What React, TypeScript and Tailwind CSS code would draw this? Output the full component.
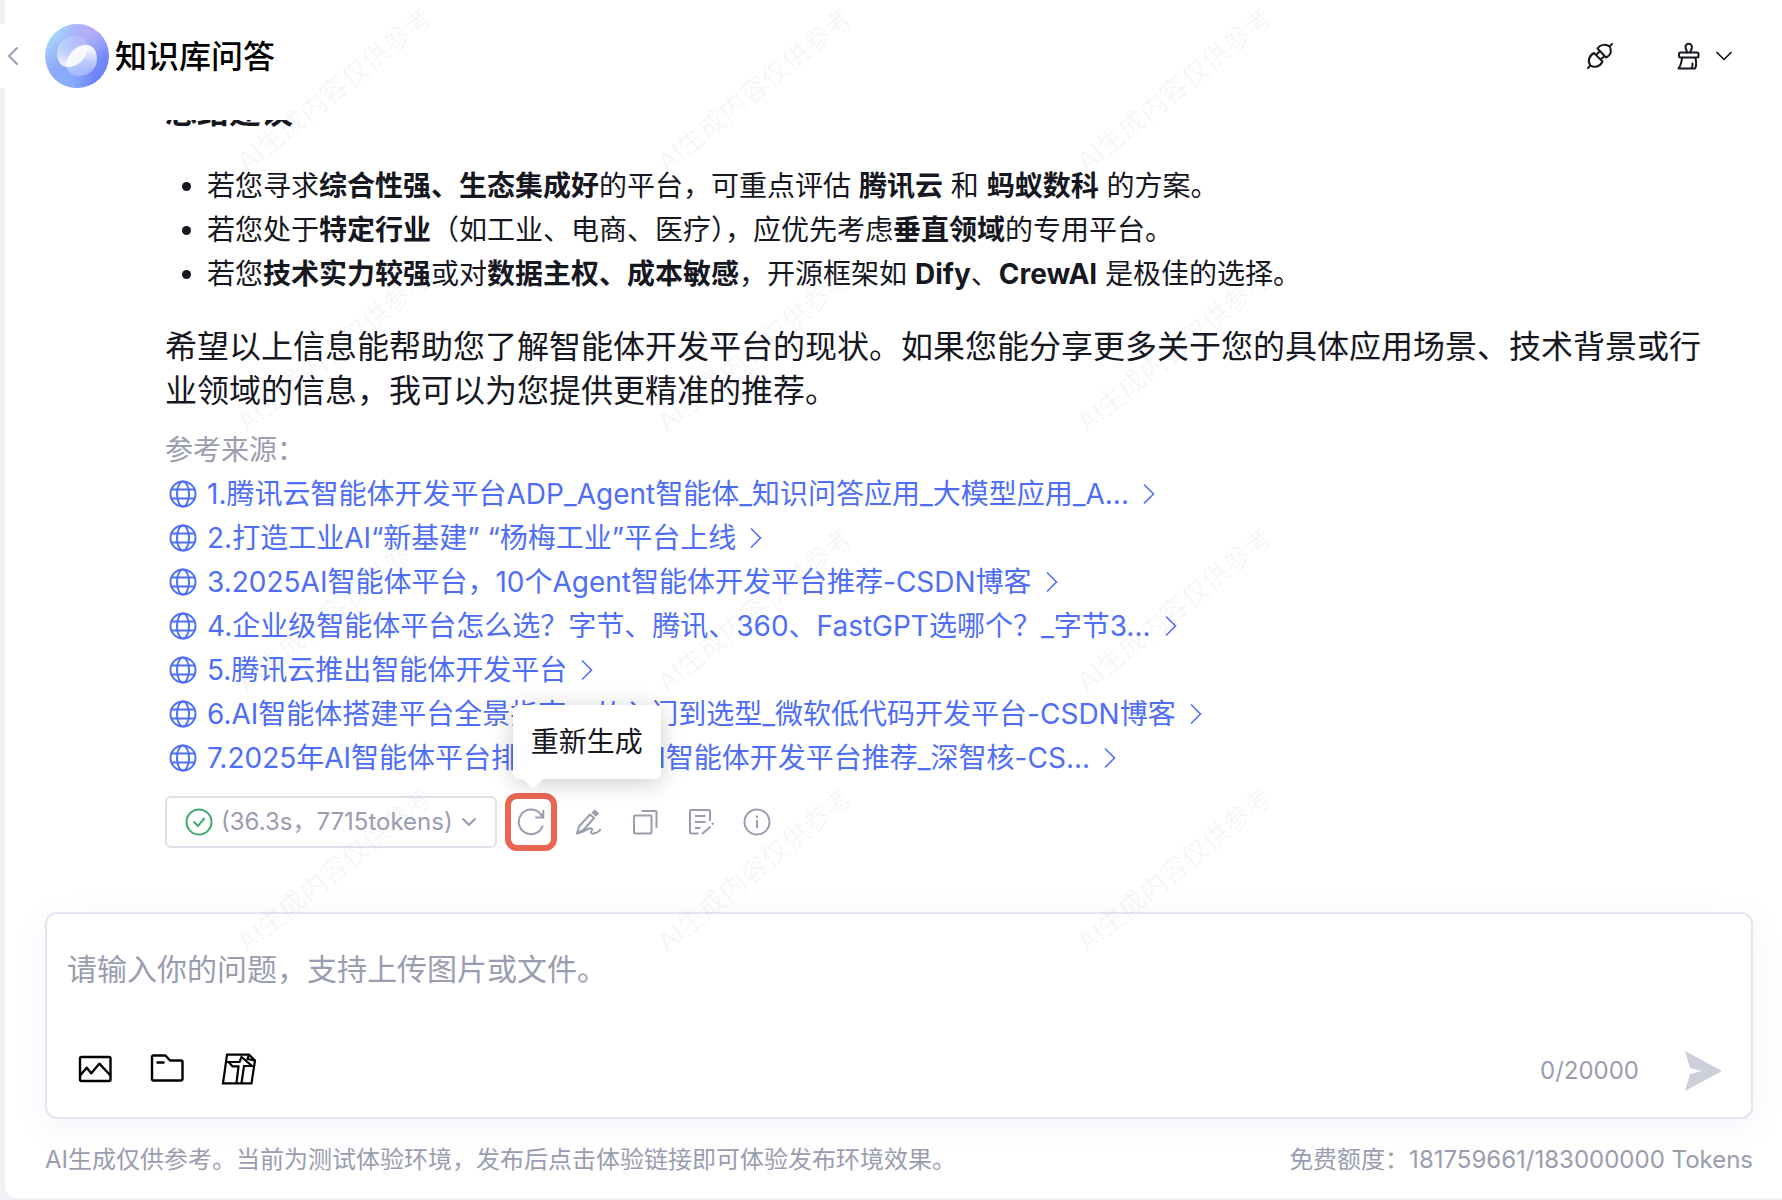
import React, { useState } from 'react';
import { ChevronDown, ChevronLeft } from 'lucide-react';

interface Source {
  id: number;
  title: string;
}

const SOURCES: Source[] = [
  { id: 1, title: '腾讯云智能体开发平台ADP_Agent智能体_知识问答应用_大模型应用_A...' },
  { id: 2, title: '打造工业AI“新基建” “杨梅工业”平台上线' },
  { id: 3, title: '2025AI智能体平台，10个Agent智能体开发平台推荐-CSDN博客' },
  { id: 4, title: '企业级智能体平台怎么选？字节、腾讯、360、FastGPT选哪个？_字节3...' },
  { id: 5, title: '腾讯云推出智能体开发平台' },
  { id: 6, title: 'AI智能体搭建平台全景指南：从入门到选型_微软低代码开发平台-CSDN博客' },
  { id: 7, title: '2025年AI智能体平台排行榜汇总 AI智能体开发平台推荐_深智核-CS...' },
];

const MAX_LENGTH = 20000;

const Logo = () => (
  <svg viewBox="0 0 64 64" className="h-16 w-16 shrink-0" aria-hidden="true">
    <defs>
      <linearGradient id="logo-bg" x1="0.1" y1="0.1" x2="0.85" y2="0.85">
        <stop offset="0" stopColor="#abdcfb" />
        <stop offset="0.45" stopColor="#8fa6fa" />
        <stop offset="1" stopColor="#6a80f8" />
      </linearGradient>
      <radialGradient id="logo-pink" cx="0.68" cy="0.08" r="0.45">
        <stop offset="0" stopColor="#b9aef8" />
        <stop offset="1" stopColor="#b9aef8" stopOpacity="0" />
      </radialGradient>
      <radialGradient id="logo-sky" cx="0.3" cy="1" r="0.5">
        <stop offset="0" stopColor="#8cb4fb" />
        <stop offset="1" stopColor="#8cb4fb" stopOpacity="0" />
      </radialGradient>
      <linearGradient id="logo-top" x1="0.3" y1="1" x2="0.6" y2="0">
        <stop offset="0" stopColor="#fff" stopOpacity="0.9" />
        <stop offset="0.4" stopColor="#fff" stopOpacity="0.4" />
        <stop offset="1" stopColor="#fff" stopOpacity="0.15" />
      </linearGradient>
      <linearGradient id="logo-bottom" x1="0.6" y1="0" x2="0.4" y2="1">
        <stop offset="0" stopColor="#fff" stopOpacity="0.95" />
        <stop offset="0.5" stopColor="#fff" stopOpacity="0.5" />
        <stop offset="1" stopColor="#fff" stopOpacity="0.25" />
      </linearGradient>
    </defs>
    <circle cx="32" cy="32" r="32" fill="url(#logo-bg)" />
    <circle cx="32" cy="32" r="32" fill="url(#logo-pink)" />
    <circle cx="32" cy="32" r="32" fill="url(#logo-sky)" />
    <path d="M12 29C12 19 20 12 30 12C38 12 43 16 43 23C43 33 34 43 23 43C16 43 12 37 12 29Z" fill="url(#logo-top)" />
    <path d="M52 35C52 45 44 52 34 52C26 52 21.500 48 21.500 41C21.500 31 30 21 41 21C48 21 52 27 52 35Z" fill="url(#logo-bottom)" />
    <path d="M21.500 42.800C21 33 29 21.500 43 21C43 33 34 43 21.500 42.800Z" fill="#fff" fillOpacity="0.7" />
  </svg>
);

const PlugIcon = () => (
  <svg viewBox="0 0 28 28" className="h-7 w-7" fill="none" stroke="currentColor" strokeWidth="2" strokeLinecap="round" strokeLinejoin="round" aria-hidden="true">
    <path d="M11.500 6.500L20 15.500C25.500 13 26 8 23.500 4.500C20 1.500 14 2.500 11.500 6.500ZM23.500 4.500L26 2" />
    <path d="M8 11L16.500 19.500C14 25 8 26 4.500 23.500C1.500 20 2.500 14 8 11ZM10 13l3-3M14.500 17.500l3-2.500M4.500 23.500L2 26" />
  </svg>
);

const BrushIcon = () => (
  <svg viewBox="0 0 28 28" className="h-7 w-7" fill="none" stroke="currentColor" strokeWidth="2" strokeLinecap="round" strokeLinejoin="round" aria-hidden="true">
    <path d="M13 10.500C13 8 11.500 7.500 11.500 5a3.200 3.200 0 0 1 6.400 0C17.900 7.500 16.500 8 16.500 10.500" />
    <rect x="5" y="10.500" width="19.500" height="5" rx="1.500" />
    <path d="M8 16C7.500 21 6.500 24 4.500 26.500H21C22 25 22.500 21 21.500 16M17.500 26C18.500 25 18.800 23.500 18.500 21.500" />
  </svg>
);

const GlobeIcon = () => (
  <svg viewBox="0 0 28 28" className="h-7 w-7 shrink-0" fill="none" stroke="currentColor" strokeWidth="2" aria-hidden="true">
    <circle cx="14" cy="14" r="12.500" />
    <ellipse cx="14" cy="14" rx="6" ry="12.500" />
    <path d="M2.500 9.500h23M2.500 18.500h23" />
  </svg>
);

const ArrowIcon = () => (
  <svg viewBox="0 0 12 22" className="h-[22px] w-3 shrink-0" fill="none" stroke="currentColor" strokeWidth="1.600" aria-hidden="true">
    <path d="M1 1.500L10.500 11L1 20.500" />
  </svg>
);

const CheckIcon = () => (
  <svg viewBox="0 0 28 28" className="h-7 w-7 text-[#3cab6b]" fill="none" stroke="currentColor" strokeWidth="2" aria-hidden="true">
    <circle cx="14" cy="14" r="12.500" />
    <path d="M8.500 13.500l4.500 4.500l6.500-8" />
  </svg>
);

const RefreshIcon = () => (
  <svg viewBox="0 0 28 28" className="h-7 w-7" fill="none" stroke="currentColor" strokeWidth="2" aria-hidden="true">
    <path d="M25.800 17.500A12.300 12.300 0 1 1 23.500 6L26 9M26.300 2v7.500h-8" />
  </svg>
);

const EditIcon = () => (
  <svg viewBox="0 0 28 28" className="h-7 w-7" fill="none" stroke="currentColor" strokeWidth="2" strokeLinejoin="round" aria-hidden="true">
    <path d="M2 25.500l2-7L15 6.500l4 3.500L8.500 22z" />
    <path d="M2 25.500c5-.5 8-3 11-4.500c3-1.500 5-.5 3.500 2c-1 2 0 3 2 2.500c3-.5 6-1.500 7-4.500" />
    <path d="M18 3l4.500 4" strokeWidth="4.500" />
  </svg>
);

const CopyIcon = () => (
  <svg viewBox="0 0 28 28" className="h-7 w-7" fill="none" stroke="currentColor" strokeWidth="2" strokeLinejoin="round" aria-hidden="true">
    <rect x="3" y="7.500" width="17.500" height="18" rx="1" />
    <path d="M10.500 3H24.500a1 1 0 0 1 1 1V20" />
  </svg>
);

const NoteIcon = () => (
  <svg viewBox="0 0 28 28" className="h-7 w-7" fill="none" stroke="currentColor" strokeWidth="2" strokeLinejoin="round" aria-hidden="true">
    <path d="M11.500 25.500H4a1 1 0 0 1-1-1V3a1 1 0 0 1 1-1H22a1 1 0 0 1 1 1V13M8 8h10.500M8 14h10.500M8 20h5.500M15 26l8.500-7.500M25 16.500l1.500-1.500" />
  </svg>
);

const InfoIcon = () => (
  <svg viewBox="0 0 28 28" className="h-7 w-7" fill="none" stroke="currentColor" strokeWidth="2" aria-hidden="true">
    <circle cx="14" cy="14" r="12.500" />
    <path d="M14 12v8M14 7.500v2.500" />
  </svg>
);

const ImageIcon = () => (
  <svg viewBox="0 0 36 36" className="h-9 w-9" fill="none" stroke="currentColor" strokeWidth="2.400" strokeLinejoin="round" aria-hidden="true">
    <rect x="3" y="6" width="30.500" height="24" rx="1.500" />
    <path d="M3 24.500L9.700 16.700L14.300 22.300L22.300 12.700L33.500 24.500" />
  </svg>
);

const FolderIcon = () => (
  <svg viewBox="0 0 36 36" className="h-9 w-9" fill="none" stroke="currentColor" strokeWidth="2.400" strokeLinejoin="round" aria-hidden="true">
    <path d="M3 6a1.500 1.500 0 0 1 1.500-1.500H16.500L21 9.500H32a1.500 1.500 0 0 1 1.500 1.500V28a1.500 1.500 0 0 1-1.500 1.500H4.500A1.500 1.500 0 0 1 3 28ZM7.500 11.500H15.500" />
  </svg>
);

const TextFileIcon = () => (
  <svg viewBox="0 0 36 36" className="h-9 w-9" fill="none" stroke="currentColor" strokeWidth="2.200" aria-hidden="true">
    <path d="M6 3.700H28L34 9.500L30.500 32.300H2ZM28 3.700L26.500 8L33.500 9.500" />
    <path d="M5.500 11H18.500L20.500 6L31 15H23L20.500 32M7.500 11L11.500 15.300H17.500L15.500 32" />
  </svg>
);

const SendIcon = () => (
  <svg viewBox="0 0 38 40" className="h-10 w-10" fill="currentColor" aria-hidden="true">
    <path d="M1 0L38 20L1 40L6 23L18 20L6 17Z" />
  </svg>
);

const Watermark = () => (
  <div className="pointer-events-none absolute inset-0 z-20 overflow-hidden pt-0.5 pl-[120px]" aria-hidden="true">
    <div className="grid auto-rows-[176px] grid-cols-[repeat(3,420px)] gap-y-[84px]">
      {[...Array(12)].map((_, i) => (
        <div key={i} className="flex items-center justify-center">
          <span className="-rotate-39 text-[27px] whitespace-nowrap text-[#5a5f8c]/6">AI生成内容仅供参考</span>
        </div>
      ))}
    </div>
  </div>
);

const SourceLink = ({ source }: { source: Source }) => (
  <li className="flex">
    <a href={`#source-${source.id}`} className="flex h-11 items-center pl-1 text-[#4f6ef7]">
      <GlobeIcon />
      <span className="ml-2.5 whitespace-nowrap">
        {source.id}.{source.title}
      </span>
      <span className="ml-3.5">
        <ArrowIcon />
      </span>
    </a>
  </li>
);

export default function App() {
  const [question, setQuestion] = useState('');

  return (
    <div className="h-screen bg-[#eff1f5] pb-0.5 pl-[5px] font-[Inter,'Noto_Sans_CJK_SC',sans-serif] text-[#16171f]">
      <div className="relative flex h-full flex-col rounded-bl-xl bg-white pr-[29px] pl-10">
        <Watermark />

        {/* Header */}
        <header className="flex h-[120px] shrink-0 items-start justify-between pt-6">
          <div className="flex h-16 items-center">
            <button type="button" aria-label="收起" className="absolute -left-[5px] flex h-16 w-[26px] items-center justify-center bg-white text-[#9a9cb0]">
              <ChevronLeft className="h-8 w-8 shrink-0" strokeWidth={1.5} />
            </button>
            <Logo />
            <h1 className="ml-1.5 pt-0.5 text-[32px] font-medium text-black">知识库问答</h1>
          </div>
          <div className="flex h-16 items-center pr-[15px]">
            <button type="button" aria-label="插件">
              <PlugIcon />
            </button>
            <button type="button" aria-label="清空对话" className="ml-15 flex items-center gap-2">
              <BrushIcon />
              <ChevronDown className="h-7 w-7" strokeWidth={1.5} />
            </button>
          </div>
        </header>

        {/* Conversation */}
        <main className="flex min-h-0 flex-1 flex-col justify-end overflow-hidden pr-10 pb-[61px] pl-[120px]">
          <h2 className="text-[32px] leading-11 font-bold">总结建议</h2>
          <ul className="mt-[30px] list-disc pl-[42px] text-[28px] leading-11">
            <li>
              若您寻求<strong>综合性强、生态集成好</strong>的平台，可重点评估 <strong>腾讯云</strong> 和 <strong>蚂蚁数科</strong> 的方案。
            </li>
            <li>
              若您处于<strong>特定行业</strong>（如工业、电商、医疗），应优先考虑<strong>垂直领域</strong>的专用平台。
            </li>
            <li>
              若您<strong>技术实力较强</strong>或对<strong>数据主权、成本敏感</strong>，开源框架如 <strong>Dify</strong>、<strong>CrewAI</strong> 是极佳的选择。
            </li>
          </ul>
          <p className="mt-[29px] text-[32px] leading-11">
            希望以上信息能帮助您了解智能体开发平台的现状。如果您能分享更多关于您的具体应用场景、技术背景或行业领域的信息，我可以为您提供更精准的推荐。
          </p>

          <div className="mt-[15px] text-[28px] leading-11">
            <p className="text-[#9a9cb0]">参考来源：</p>
            <ul>
              {SOURCES.map((source) => (
                <SourceLink key={source.id} source={source} />
              ))}
            </ul>
          </div>

          {/* Answer actions */}
          <div className="mt-[13px] flex items-center text-[#9a9cb0]">
            <button type="button" className="flex h-[52px] items-center rounded-md border-2 border-[#dfe1ea] pr-3.5 pl-[18px] text-2xl">
              <CheckIcon />
              <span className="ml-2">(36.3s，7715tokens)</span>
              <ChevronDown className="ml-1 h-6 w-6" strokeWidth={2} />
            </button>
            <div className="relative ml-2">
              <button type="button" aria-label="重新生成" className="flex h-[58px] w-[52px] items-center justify-center rounded-xl border-[6px] border-[#eb6553]">
                <RefreshIcon />
              </button>
              <div role="tooltip" className="absolute bottom-full left-2 z-10 mb-3.5 rounded-md bg-white px-[18px] py-[15px] text-[28px] leading-11 whitespace-nowrap text-[#16171f] shadow-[0_4px_24px_rgba(0,0,0,0.2)]">
                重新生成
                <span className="absolute top-full left-2.5 h-0 w-0 border-x-10 border-t-10 border-x-transparent border-t-white" />
              </div>
            </div>
            <div className="ml-[18px] flex gap-7">
              <button type="button" aria-label="编辑">
                <EditIcon />
              </button>
              <button type="button" aria-label="复制">
                <CopyIcon />
              </button>
              <button type="button" aria-label="批注">
                <NoteIcon />
              </button>
              <button type="button" aria-label="详情">
                <InfoIcon />
              </button>
            </div>
          </div>
        </main>

        {/* Composer */}
        <div className="shrink-0 rounded-xl border-2 border-[#e1e6f0] bg-white shadow-[0_8px_32px_rgba(80,110,180,0.08)]">
          <textarea
            aria-label="请输入你的问题"
            rows={2}
            maxLength={MAX_LENGTH}
            placeholder="请输入你的问题，支持上传图片或文件。"
            value={question}
            onChange={(e) => setQuestion(e.target.value)}
            className="block w-full resize-none px-5 pt-[33px] text-[30px] leading-11 outline-none placeholder:text-[#9a9cb0]"
          />
          <div className="flex h-[82px] items-start justify-between pt-4 pr-7 pl-[30px]">
            <div className="flex gap-9 text-black">
              <button type="button" aria-label="上传图片">
                <ImageIcon />
              </button>
              <button type="button" aria-label="上传文件">
                <FolderIcon />
              </button>
              <button type="button" aria-label="上传文档">
                <TextFileIcon />
              </button>
            </div>
            <div className="flex items-center gap-11 text-2xl text-[#9a9cb0]">
              <span>
                {question.length}/{MAX_LENGTH}
              </span>
              <button type="button" aria-label="发送" className="text-[#cdcfdb]">
                <SendIcon />
              </button>
            </div>
          </div>
        </div>

        <footer className="flex shrink-0 justify-between pt-[23px] pb-5 text-2xl leading-9 text-[#9a9cb0]">
          <p>AI生成仅供参考。当前为测试体验环境，发布后点击体验链接即可体验发布环境效果。</p>
          <p>免费额度：181759661/183000000 Tokens</p>
        </footer>
      </div>
    </div>
  );
}
